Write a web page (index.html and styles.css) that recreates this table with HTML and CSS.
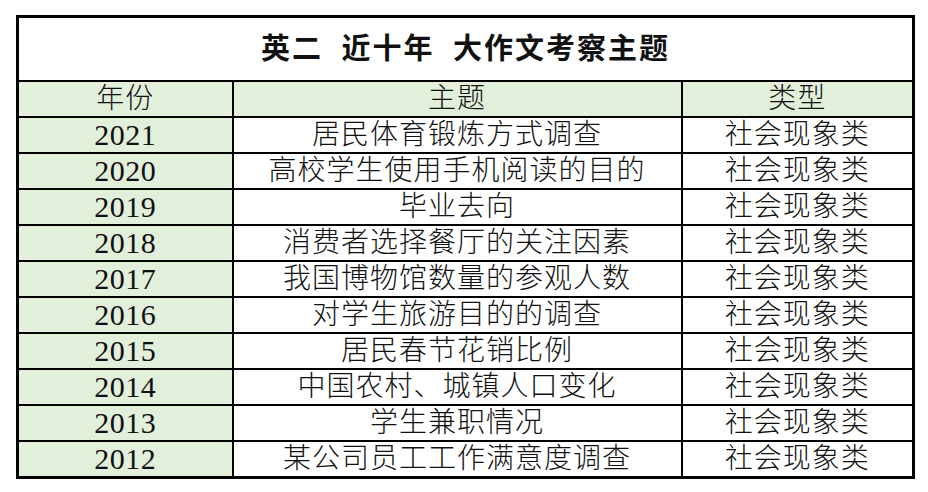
FILE: index.html
```html
<!DOCTYPE html>
<html lang="zh">
<head>
<meta charset="utf-8">
<link rel="stylesheet" href="styles.css">
</head>
<body>
<table class="sheet">
  <colgroup>
    <col class="c-year">
    <col class="c-topic">
    <col class="c-type">
  </colgroup>
  <tr class="title-row"><td colspan="3" class="title">英二&nbsp; 近十年&nbsp; 大作文考察主题</td></tr>
  <tr class="head"><td>年份</td><td>主题</td><td>类型</td></tr>
  <tr><td class="year">2021</td><td>居民体育锻炼方式调查</td><td>社会现象类</td></tr>
  <tr><td class="year">2020</td><td>高校学生使用手机阅读的目的</td><td>社会现象类</td></tr>
  <tr><td class="year">2019</td><td>毕业去向</td><td>社会现象类</td></tr>
  <tr><td class="year">2018</td><td>消费者选择餐厅的关注因素</td><td>社会现象类</td></tr>
  <tr><td class="year">2017</td><td>我国博物馆数量的参观人数</td><td>社会现象类</td></tr>
  <tr><td class="year">2016</td><td>对学生旅游目的的调查</td><td>社会现象类</td></tr>
  <tr><td class="year">2015</td><td>居民春节花销比例</td><td>社会现象类</td></tr>
  <tr><td class="year">2014</td><td>中国农村、城镇人口变化</td><td>社会现象类</td></tr>
  <tr><td class="year">2013</td><td>学生兼职情况</td><td>社会现象类</td></tr>
  <tr><td class="year">2012</td><td>某公司员工工作满意度调查</td><td>社会现象类</td></tr>
</table>
</body>
</html>
```

FILE: styles.css
```css
html, body {
  margin: 0;
  padding: 0;
  background: #ffffff;
}
body {
  padding: 15px 0 0 16px;
  font-family: "Liberation Serif", "Noto Sans CJK SC", serif;
  color: #111111;
}
.sheet {
  border-collapse: collapse;
  border: 3px solid #000;
  table-layout: fixed;
  width: 896px;
}
.c-year { width: 215px; }
.c-topic { width: 449px; }
.c-type { width: 232px; }
.sheet td {
  border: 2px solid #000;
  text-align: center;
  vertical-align: middle;
  height: 34px;
  padding: 0;
  font-size: 28px;
  font-weight: 300;
  line-height: 34px;
  letter-spacing: 1px;
  white-space: nowrap;
  overflow: hidden;
}
.sheet .title {
  height: 62px;
  font-size: 29px;
  font-weight: 700;
  letter-spacing: 2px;
}
.head td {
  background: #e2efda;
}
.sheet td.year {
  background: #e2efda;
  font-size: 30px;
  letter-spacing: 0.5px;
}
```
